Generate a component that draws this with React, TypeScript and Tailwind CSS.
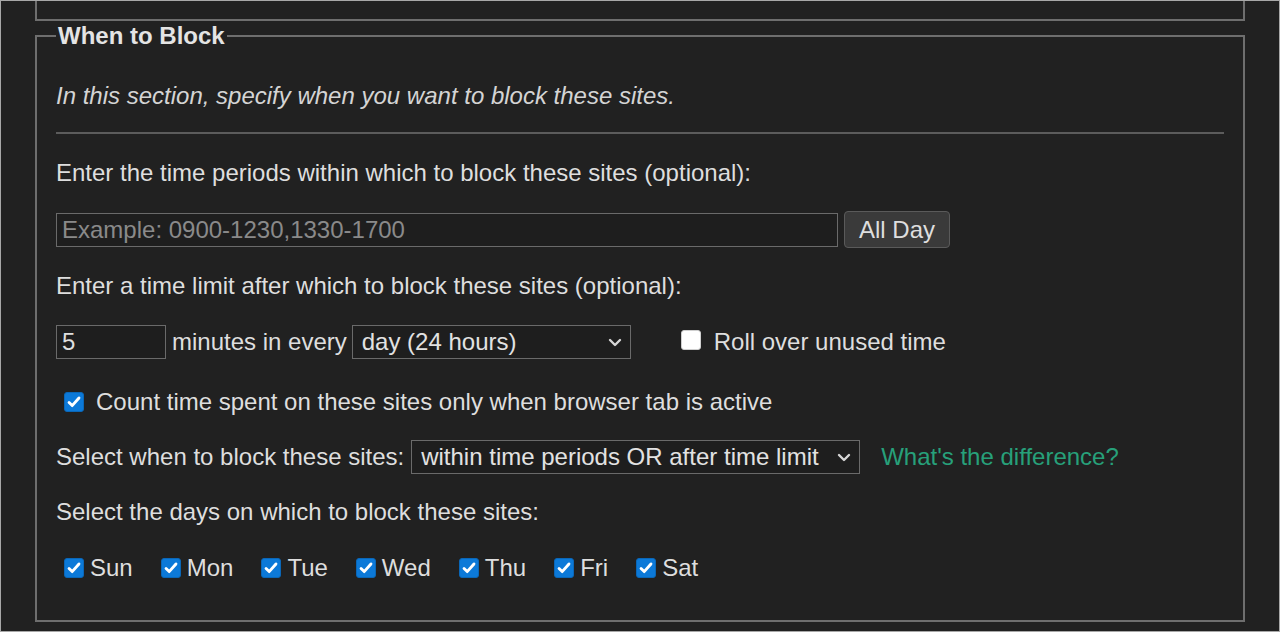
import React from "react";

const days = ["Sun", "Mon", "Tue", "Wed", "Thu", "Fri", "Sat"];

function Check({ checked }: { checked: boolean }) {
  if (!checked) {
    return <span className="inline-block h-[20px] w-[20px] shrink-0 rounded-[3px] border border-[#cfcfcf] bg-white" />;
  }
  return (
    <span className="inline-flex h-[20px] w-[20px] shrink-0 items-center justify-center rounded-[3px] border border-[#0a67b8] bg-[#0c79d8]">
      <svg viewBox="0 0 20 20" className="h-[18px] w-[18px]" fill="none" stroke="white" strokeWidth="3.2" strokeLinecap="round" strokeLinejoin="round">
        <path d="M4.5 10.5l3.5 3.5 7.5-8.5" />
      </svg>
    </span>
  );
}

function Chevron() {
  return (
    <svg viewBox="0 0 14 9" className="h-[9px] w-[14px]" fill="none" stroke="#d6d6d6" strokeWidth="2.4" strokeLinecap="round" strokeLinejoin="round">
      <path d="M2 2l5 5 5-5" />
    </svg>
  );
}

function Select({ value, width }: { value: string; width: string }) {
  return (
    <div className={`flex h-[34px] items-center justify-between border border-[#6a6a6a] bg-[#1e1e1e] pl-[9px] pr-[8px] text-[24px] text-[#e2e2e2] ${width}`}>
      <span>{value}</span>
      <Chevron />
    </div>
  );
}

export default function App() {
  return (
    <div className="h-[632px] w-[1280px] overflow-hidden border border-[#a8a8a8] bg-[#212121] text-[24px] leading-[28px] text-[#dedede]" style={{ fontFamily: '"Liberation Sans", Arial, sans-serif' }}>
      {/* Previous section (tail end) */}
      <div className="mx-[34px] -mt-[10px] h-[30px] border-2 border-t-0 border-[#6e6e6e]" />

      {/* When to Block */}
      <fieldset className="mx-[34px] mt-[1px] border-2 border-[#6e6e6e] pb-[38px] pl-[19px] pr-[19px]">
        <legend className="px-[2px] text-[24px] font-bold leading-[28px] text-[#e4e4e4]">When to Block</legend>

        <p className="mt-[32px] italic text-[#d4d4d4]">In this section, specify when you want to block these sites.</p>

        <div className="mt-[22px] h-[2px] bg-[#5c5c5c]" />

        <p className="mt-[25px]">Enter the time periods within which to block these sites (optional):</p>

        <div className="mt-[24px] flex h-[37px] items-center gap-[6px]">
          <div className="flex h-[34px] w-[782px] items-center border border-[#6a6a6a] bg-[#1e1e1e] px-[5px] text-[#8a8a8a]">
            Example: 0900-1230,1330-1700
          </div>
          <button className="h-[37px] w-[106px] rounded-[4px] border border-[#5a5a5a] bg-[#3a3a3a] text-[24px] text-[#dedede]">All Day</button>
        </div>

        <p className="mt-[24px]">Enter a time limit after which to block these sites (optional):</p>

        <div className="mt-[25px] flex h-[34px] items-center">
          <div className="flex h-[34px] w-[110px] items-center border border-[#6a6a6a] bg-[#1e1e1e] px-[5px]">5</div>
          <span className="ml-[6px] mr-[5px]">minutes in every</span>
          <Select value="day (24 hours)" width="w-[279px]" />
          <span className="ml-[50px]"><Check checked={false} /></span>
          <span className="ml-[13px]">Roll over unused time</span>
        </div>

        <div className="mt-[29px] flex items-center pl-[8px]">
          <Check checked />
          <span className="ml-[12px]">Count time spent on these sites only when browser tab is active</span>
        </div>

        <div className="mt-[24px] flex h-[34px] items-center">
          <span className="mr-[7px]">Select when to block these sites:</span>
          <Select value="within time periods OR after time limit" width="w-[449px]" />
          <a className="ml-[21px] text-[#27a07a]">What's the difference?</a>
        </div>

        <p className="mt-[24px]">Select the days on which to block these sites:</p>

        <div className="mt-[28px] flex items-center pl-[8px]">
          {days.map((d) => (
            <div key={d} className="mr-[28px] flex items-center">
              <Check checked />
              <span className="ml-[6px]">{d}</span>
            </div>
          ))}
        </div>
      </fieldset>
    </div>
  );
}
